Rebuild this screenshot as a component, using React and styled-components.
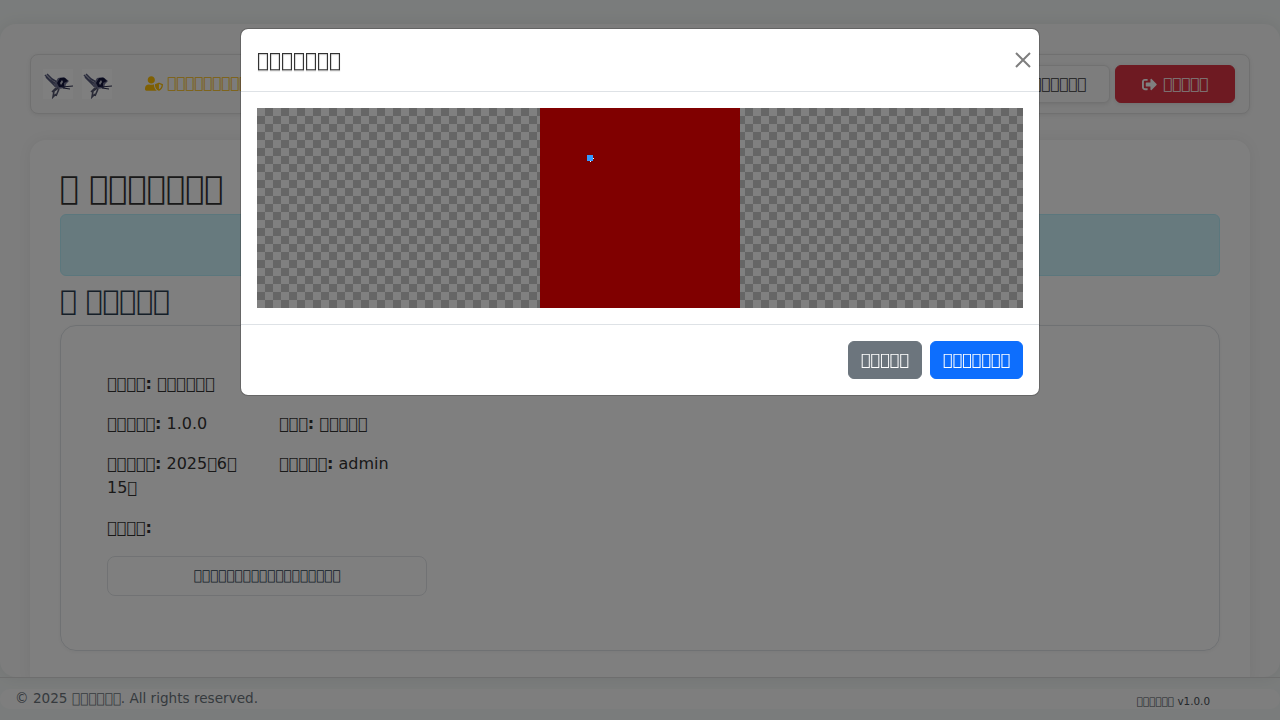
import React from 'react';
import styled, { createGlobalStyle } from 'styled-components';
import { FaUserShield, FaSignOutAlt } from 'react-icons/fa';

// the reference shows missing-glyph boxes, so these are code points no font has
const box = (n) => '\uE000'.repeat(n);

const Global = createGlobalStyle`
  html, body { margin: 0; height: 100%; overflow: hidden; }
  body {
    background: #f5f9f8;
    color: #333;
    font-family: "DejaVu Sans", sans-serif;
    font-size: 16px;
    line-height: 1.5;
  }
  * { box-sizing: border-box; }
`;

const Shell = styled.div`
  height: 720px;
  display: flex;
  flex-direction: column;
  padding-top: 24px;
`;

const Panel = styled.main`
  flex: 1;
  min-height: 0;
  overflow: hidden;
  background: #fafafa;
  border-radius: 16px;
  padding: 30px;
  box-shadow: 0 0 16px rgba(0, 0, 0, 0.08);
`;

const Navbar = styled.nav`
  height: 60px;
  display: flex;
  align-items: center;
  padding: 0 14px 0 12px;
  background: #f8f8f8;
  border: 1px solid #e0e0e0;
  border-radius: 8px;
  box-shadow: 0 1px 4px rgba(0, 0, 0, 0.08);
`;

const Logos = styled.div`
  display: flex;
  gap: 9px;
  margin-right: 33px;
`;

const UserTag = styled.span`
  display: flex;
  align-items: center;
  gap: 4px;
  margin-top: -2px;
  color: #ffc107;
  font-size: 15px;
  svg { width: 18px; height: 15px; }
`;

const NavActions = styled.div`
  margin-left: auto;
  display: flex;
  gap: 5px;
`;

const NavButton = styled.button`
  height: 38px;
  display: flex;
  align-items: center;
  gap: 6px;
  padding: 0 ${(p) => (p.$danger ? '26px' : '23px')};
  border-radius: 6px;
  font: inherit;
  font-size: 15px;
  color: ${(p) => (p.$danger ? '#fff' : '#333')};
  background: ${(p) => (p.$danger ? '#dc3545' : '#fafafa')};
  border: 1px solid ${(p) => (p.$danger ? '#dc3545' : '#e3e3e3')};
  box-shadow: 0 1px 4px rgba(0, 0, 0, 0.1);
  svg { width: 15px; height: 15px; }
`;

const PageCard = styled.section`
  margin-top: 26px;
  padding: 30px;
  background: #fff;
  border-radius: 16px 16px 0 0;
  box-shadow: 0 0 14px rgba(0, 0, 0, 0.06);
`;

const Title = styled.h1`
  margin: 0 0 8px;
  font-size: 32px;
  font-weight: 500;
  line-height: 36px;
`;

const Notice = styled.div`
  height: 62px;
  background: #cff4fc;
  border: 1px solid #b6effb;
  border-radius: 6px;
`;

const Subtitle = styled.h2`
  margin: 8px 0 7px;
  color: #2c3e50;
  font-size: 28px;
  font-weight: 500;
  line-height: 34px;
`;

const InfoCard = styled.div`
  padding: 46px 46px 54px;
  border: 1px solid #dee2e6;
  border-radius: 16px;
  box-shadow: 0 1px 4px rgba(0, 0, 0, 0.05);
`;

const InfoGrid = styled.div`
  width: 320px;
  display: grid;
  grid-template-columns: 148px 148px;
  column-gap: 24px;
  row-gap: 16px;
`;

const Field = styled.div`
  grid-column: ${(p) => (p.$wide ? '1 / -1' : 'auto')};
`;

const Note = styled.div`
  grid-column: 1 / -1;
  height: 40px;
  display: flex;
  align-items: center;
  justify-content: center;
  padding-bottom: 2px;
  font-size: 13.6px;
  color: #2c3e50;
  border: 1px solid #e2e5e8;
  border-radius: 8px;
`;

const Footer = styled.footer`
  flex: none;
  height: 43px;
  padding-top: 11px;
  border-top: 1px solid #dcdcdc;
`;

const FooterBar = styled.div`
  height: 20px;
  display: flex;
  align-items: flex-start;
  justify-content: space-between;
  padding: 0 70px 0 15px;
  background: #fdfdfd;
  border-radius: 10px;
  font-size: 13.6px;
  line-height: 18px;
  color: #6c757d;
`;

const Version = styled.span`
  font-size: 10.4px;
  padding-top: 3px;
  color: #495057;
`;

const Backdrop = styled.div`
  position: fixed;
  inset: 0;
  background: rgba(0, 0, 0, 0.5);
`;

const ModalLayer = styled.div`
  position: fixed;
  inset: 0;
  display: flex;
  justify-content: center;
  align-items: flex-start;
  padding-top: 28px;
`;

const Modal = styled.div`
  width: 800px;
  background: #fff;
  border: 1px solid rgba(0, 0, 0, 0.2);
  border-radius: 8px;
  background-clip: padding-box;
`;

const ModalHeader = styled.div`
  height: 63px;
  display: flex;
  align-items: center;
  justify-content: space-between;
  padding: 0 8px 0 16px;
  border-bottom: 1px solid #dee2e6;
`;

const ModalTitle = styled.h5`
  margin: 0;
  font-size: 20px;
  font-weight: 500;
  line-height: 30px;
  text-shadow: 0 1px 1px rgba(0, 0, 0, 0.25);
`;

const CloseButton = styled.button`
  width: 16px;
  height: 16px;
  padding: 0;
  border: 0;
  background: none;
  opacity: 0.5;
  display: block;
`;

const ModalBody = styled.div`
  padding: 16px;
`;

const Checker = styled.div`
  height: 200px;
  display: flex;
  justify-content: center;
  background-color: #808080;
  background-image: conic-gradient(#666 25%, transparent 0 50%, #666 0 75%, transparent 0);
  background-size: 16px 16px;
`;

const RedFrame = styled.div`
  position: relative;
  width: 200px;
  height: 200px;
  background: #800000;
`;

const Marker = styled.span`
  position: absolute;
  left: 47px;
  top: 47px;
  width: 6px;
  height: 6px;
  background: #3399ff;
  &::before, &::after {
    content: '';
    position: absolute;
    width: 1px;
    height: 1px;
    background: #fff;
  }
  &::before { left: 6px; top: 3px; }
  &::after { left: 3px; top: 6px; }
`;

const ModalFooter = styled.div`
  display: flex;
  justify-content: flex-end;
  gap: 8px;
  padding: 16px;
  border-top: 1px solid #dee2e6;
`;

const ModalButton = styled.button`
  height: 38px;
  padding: 0 12px;
  font: inherit;
  color: #fff;
  border: 1px solid ${(p) => p.$bg};
  background: ${(p) => p.$bg};
  border-radius: 6px;
`;

function Logo() {
  return (
    <svg width="30" height="30" viewBox="0 0 30 30">
      <rect width="30" height="30" fill="#fff" />
      <path d="M2 6 L7 11 L13 15 M4 5 L9 10 L14 13 M3 8 L9 14 L13 18" stroke="#55587a" strokeWidth="1.6" fill="none" />
      <path d="M12 14 L15 9 L21 8 L26 12 L23 15 L22 19 L15 20 L11 17 Z" fill="#6f7190" />
      <path d="M14 14 L17 9 L22 9 L25 12 L21 14 L21 18 L16 18 Z" fill="#14163c" />
      <path d="M17 14 L19 11 L20 13 L18 16 Z" fill="#c9cad6" />
      <path d="M19 18 L30 17 M20 19 L27 20" stroke="#2a2c4c" strokeWidth="1.1" fill="none" />
      <path d="M15 19 L11 22 L10 28 L13 25 M13 19 L9 23 M16 20 L13 27" stroke="#54566f" strokeWidth="1.6" fill="none" />
    </svg>
  );
}

export default function App() {
  return (
    <>
      <Global />
      <Shell>
        <Panel>
          <Navbar>
            <Logos>
              <Logo />
              <Logo />
            </Logos>
            <UserTag>
              <FaUserShield />
              {box(10)}
            </UserTag>
            <NavActions>
              <NavButton>{box(8)}</NavButton>
              <NavButton $danger>
                <FaSignOutAlt />
                {box(5)}
              </NavButton>
            </NavActions>
          </Navbar>
          <PageCard>
            <Title>{box(1)} {box(7)}</Title>
            <Notice />
            <Subtitle>{box(1)} {box(5)}</Subtitle>
            <InfoCard>
              <InfoGrid>
                <Field $wide><b>{box(4)}:</b> {box(6)}</Field>
                <Field><b>{box(5)}:</b> 1.0.0</Field>
                <Field><b>{box(3)}:</b> {box(5)}</Field>
                <Field><b>{box(5)}:</b> 2025{box(1)}6{box(1)} 15{box(1)}</Field>
                <Field><b>{box(5)}:</b> admin</Field>
                <Field $wide><b>{box(4)}:</b></Field>
                <Note>{box(18)}</Note>
              </InfoGrid>
            </InfoCard>
          </PageCard>
        </Panel>
        <Footer>
          <FooterBar>
            <span>© 2025 {box(6)}. All rights reserved.</span>
            <Version>{box(6)} v1.0.0</Version>
          </FooterBar>
        </Footer>
      </Shell>
      <Backdrop />
      <ModalLayer>
        <Modal>
          <ModalHeader>
            <ModalTitle>{box(7)}</ModalTitle>
            <CloseButton aria-label="close">
              <svg width="16" height="16" viewBox="0 0 16 16">
                <path d="M1 1 L15 15 M15 1 L1 15" stroke="#000" strokeWidth="2" />
              </svg>
            </CloseButton>
          </ModalHeader>
          <ModalBody>
            <Checker>
              <RedFrame>
                <Marker />
              </RedFrame>
            </Checker>
          </ModalBody>
          <ModalFooter>
            <ModalButton $bg="#6c757d">{box(5)}</ModalButton>
            <ModalButton $bg="#0d6efd">{box(7)}</ModalButton>
          </ModalFooter>
        </Modal>
      </ModalLayer>
    </>
  );
}
